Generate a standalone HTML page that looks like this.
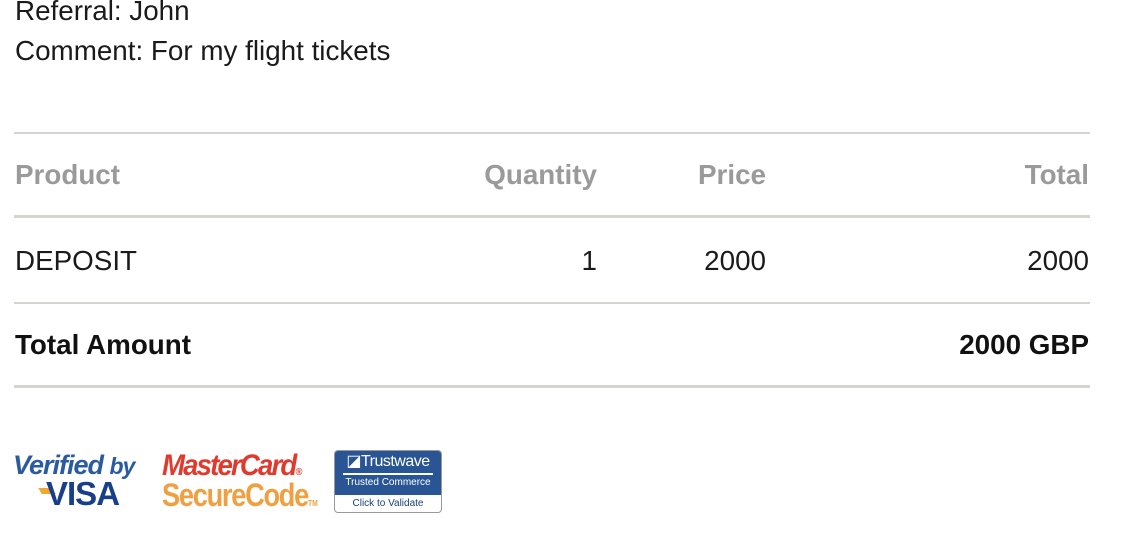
<!DOCTYPE html>
<html><head><meta charset="utf-8"><style>
body{margin:0;width:1144px;height:544px;background:#fff;position:relative;overflow:hidden;font-family:"Liberation Sans",Arial,sans-serif;font-size:27.8px;color:#1a1a1a}
.t{position:absolute;line-height:32px;white-space:nowrap}
.r{text-align:right}
.h{font-weight:bold;color:#9a9a9a}
.b{font-weight:bold;color:#111}
.l{position:absolute;left:14px;width:1076px;background:#d4d4d0}
</style></head><body>
<div class="t" style="left:15px;top:-5px">Referral: John</div>
<div class="t" style="left:15px;top:35px">Comment: For my flight tickets</div>
<div class="l" style="top:132px;height:2px"></div>
<div class="t h" style="left:15px;top:159px">Product</div>
<div class="t h r" style="right:547px;top:159px">Quantity</div>
<div class="t h r" style="right:378px;top:159px">Price</div>
<div class="t h r" style="right:55px;top:159px">Total</div>
<div class="l" style="top:215px;height:3px"></div>
<div class="t" style="left:15px;top:245px">DEPOSIT</div>
<div class="t r" style="right:547px;top:245px">1</div>
<div class="t r" style="right:378px;top:245px">2000</div>
<div class="t r" style="right:55px;top:245px">2000</div>
<div class="l" style="top:302px;height:2px"></div>
<div class="t b" style="left:15px;top:329px">Total Amount</div>
<div class="t b r" style="right:55px;top:329px">2000 GBP</div>
<div class="l" style="top:385px;height:3px"></div>

<div style="position:absolute;left:13px;top:451px;font-style:italic;font-weight:bold;color:#2a5aa0;font-size:27px;line-height:28px;letter-spacing:-1px;white-space:nowrap">Verified <span style="font-size:23px">by</span></div>
<div style="position:absolute;left:40px;top:488px;width:14px;height:6px;background:#f0a830;transform:skewX(30deg)"></div>
<div style="position:absolute;left:46px;top:476px;font-weight:bold;color:#1a3f8a;font-size:33px;line-height:36px;letter-spacing:-1px">VISA</div>

<div style="position:absolute;left:162px;top:450px;font-style:italic;font-weight:bold;color:#e03a2e;font-size:30px;line-height:32px;letter-spacing:-2px;white-space:nowrap;transform:scaleX(.92);transform-origin:left">MasterCard<span style="font-size:10px;letter-spacing:0">®</span></div>
<div style="position:absolute;left:162px;top:479px;font-weight:bold;color:#f0a040;font-size:32px;line-height:32px;letter-spacing:-1.5px;white-space:nowrap;transform:scaleX(.85);transform-origin:left">SecureCode<span style="font-size:8px;letter-spacing:0">TM</span></div>

<div style="position:absolute;left:334px;top:450px;width:106px;height:61px;border:1px solid #999;border-radius:4px;overflow:hidden;background:#fff">
 <div style="height:44px;background:#2a5595;color:#fff;text-align:center">
  <div style="font-size:16px;line-height:22px;letter-spacing:-.5px">◪Trustwave</div>
  <div style="margin:0 8px;height:2px;background:#fff"></div>
  <div style="font-size:10px;line-height:16px">Trusted Commerce</div>
 </div>
 <div style="font-size:10px;line-height:17px;color:#1d3f7a;text-align:center">Click to Validate</div>
</div>
</body></html>
